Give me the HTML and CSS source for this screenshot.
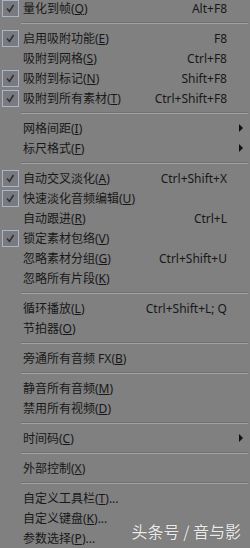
FILE: index.html
```html
<!DOCTYPE html>
<html lang="zh-CN">
<head>
  <meta charset="UTF-8" />
  <title>编辑菜单</title>
  <link rel="stylesheet" href="styles.css">
</head>
<body>

  <!-- MENU -->
  <ul class="menu">
    <li class="item checked"><span class="check"></span><span class="label">量化到帧(<u>Q</u>)</span><span class="key">Alt+F8</span></li>
    <li class="sep"></li>
    <li class="item checked"><span class="check"></span><span class="label">启用吸附功能(<u>E</u>)</span><span class="key">F8</span></li>
    <li class="item"><span class="check"></span><span class="label">吸附到网格(<u>S</u>)</span><span class="key">Ctrl+F8</span></li>
    <li class="item checked"><span class="check"></span><span class="label">吸附到标记(<u>N</u>)</span><span class="key">Shift+F8</span></li>
    <li class="item checked"><span class="check"></span><span class="label">吸附到所有素材(<u>T</u>)</span><span class="key">Ctrl+Shift+F8</span></li>
    <li class="sep"></li>
    <li class="item sub"><span class="check"></span><span class="label">网格间距(<u>I</u>)</span><span class="arrow"></span></li>
    <li class="item sub"><span class="check"></span><span class="label">标尺格式(<u>F</u>)</span><span class="arrow"></span></li>
    <li class="sep"></li>
    <li class="item checked"><span class="check"></span><span class="label">自动交叉淡化(<u>A</u>)</span><span class="key">Ctrl+Shift+X</span></li>
    <li class="item checked"><span class="check"></span><span class="label">快速淡化音频编辑(<u>U</u>)</span><span class="key"></span></li>
    <li class="item"><span class="check"></span><span class="label">自动跟进(<u>R</u>)</span><span class="key">Ctrl+L</span></li>
    <li class="item checked"><span class="check"></span><span class="label">锁定素材包络(<u>V</u>)</span><span class="key"></span></li>
    <li class="item"><span class="check"></span><span class="label">忽略素材分组(<u>G</u>)</span><span class="key">Ctrl+Shift+U</span></li>
    <li class="item"><span class="check"></span><span class="label">忽略所有片段(<u>K</u>)</span><span class="key"></span></li>
    <li class="sep"></li>
    <li class="item"><span class="check"></span><span class="label">循环播放(<u>L</u>)</span><span class="key">Ctrl+Shift+L; Q</span></li>
    <li class="item"><span class="check"></span><span class="label">节拍器(<u>O</u>)</span><span class="key"></span></li>
    <li class="sep"></li>
    <li class="item"><span class="check"></span><span class="label">旁通所有音频 FX(<u>B</u>)</span><span class="key"></span></li>
    <li class="sep"></li>
    <li class="item"><span class="check"></span><span class="label">静音所有音频(<u>M</u>)</span><span class="key"></span></li>
    <li class="item"><span class="check"></span><span class="label">禁用所有视频(<u>D</u>)</span><span class="key"></span></li>
    <li class="sep"></li>
    <li class="item sub"><span class="check"></span><span class="label">时间码(<u>C</u>)</span><span class="arrow"></span></li>
    <li class="sep"></li>
    <li class="item"><span class="check"></span><span class="label">外部控制(<u>X</u>)</span><span class="key"></span></li>
    <li class="sep"></li>
    <li class="item"><span class="check"></span><span class="label">自定义工具栏(<u>T</u>)...</span><span class="key"></span></li>
    <li class="item"><span class="check"></span><span class="label">自定义键盘(<u>K</u>)...</span><span class="key"></span></li>
    <li class="item"><span class="check"></span><span class="label">参数选择(<u>P</u>)...</span><span class="key"></span></li>
  </ul>

  <div class="watermark">头条号 / 音与影</div>

</body>
</html>
```

FILE: styles.css
```css
html, body {
  margin: 0;
  height: 100%;
  overflow: hidden;
}
body {
  background: #808080;
  color: #181818;
  font-family: 'Noto Sans', 'Noto Sans CJK SC', sans-serif;
  font-size: 12px;
  position: relative;
}
.menu {
  list-style: none;
  margin: -2px 0 0 0;
  padding: 0;
}
.item {
  display: flex;
  align-items: center;
  height: 20px;
  padding-right: 23px;
  white-space: nowrap;
}
.item.sub {
  padding-right: 7px;
}
.check {
  width: 23px;
  height: 20px;
  flex: none;
  display: flex;
  align-items: center;
}
.checked .check::before {
  content: "";
  display: block;
  box-sizing: border-box;
  width: 17px;
  height: 17px;
  margin-left: 2px;
  border: 1px solid #a9b6c8;
  background: #797b80 url("data:image/svg+xml;utf8,<svg xmlns='http://www.w3.org/2000/svg' width='15' height='15'><path d='M4 7.5 L6.5 10.5 L10.5 4' fill='none' stroke='%23303030' stroke-width='1.6'/></svg>") center no-repeat;
}
.label {
  flex: 1;
}
.label u {
  text-decoration-thickness: 1px;
  text-underline-offset: 1px;
}
.key {
  text-align: right;
}
.arrow {
  width: 0;
  height: 0;
  border-top: 4px solid transparent;
  border-bottom: 4px solid transparent;
  border-left: 4px solid #111;
}
.sep {
  height: 10px;
  display: flex;
  align-items: center;
  padding-left: 21px;
}
.sep::before {
  content: "";
  flex: 1;
  margin-right: 2px;
  border-top: 1px solid #727272;
  border-bottom: 1px solid #a2a2a2;
}
.watermark {
  position: absolute;
  right: 9px;
  bottom: 5px;
  color: rgba(255, 255, 255, 0.88);
  font-family: 'Noto Sans CJK SC', sans-serif;
  font-size: 16px;
  text-shadow: 0 0 1px rgba(0, 0, 0, 0.3);
}
```
